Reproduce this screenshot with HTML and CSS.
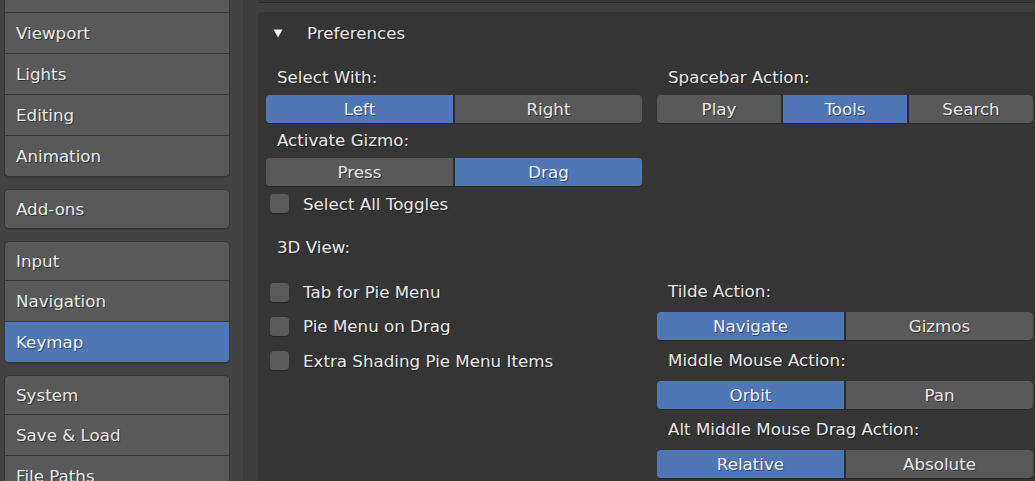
FILE: index.html
```html
<!DOCTYPE html>
<html lang="en">
<head>
    <meta charset="UTF-8">
    <meta name="viewport" content="width=device-width, initial-scale=1.0">
    <title>Preferences</title>
    <link rel="stylesheet" href="styles.css">
</head>
<body>
    <div class="app">
        <nav class="sidebar">
            <div class="group first-group">
                <div class="item">Interface</div>
                <div class="item">Viewport</div>
                <div class="item">Lights</div>
                <div class="item">Editing</div>
                <div class="item">Animation</div>
            </div>
            <div class="group">
                <div class="item">Add-ons</div>
            </div>
            <div class="group">
                <div class="item">Input</div>
                <div class="item">Navigation</div>
                <div class="item active">Keymap</div>
            </div>
            <div class="group">
                <div class="item">System</div>
                <div class="item">Save &amp; Load</div>
                <div class="item">File Paths</div>
            </div>
        </nav>

        <main class="main">
            <div class="prev-edge"></div>
            <section class="panel">
                <div class="panel-header">
                    <svg class="arrow" width="10" height="9" viewBox="0 0 10 9">
                        <polygon points="0.5,0.5 9.5,0.5 5,8.5" fill="#f0f0f0"/>
                    </svg>
                    <span>Preferences</span>
                </div>

                <div class="cols">
                    <div class="col">
                        <div class="label">Select With:</div>
                        <div class="seg">
                            <span class="on">Left</span>
                            <span>Right</span>
                        </div>
                        <div class="label">Activate Gizmo:</div>
                        <div class="seg">
                            <span>Press</span>
                            <span class="on">Drag</span>
                        </div>
                        <div class="check"><span class="box"></span>Select All Toggles</div>
                    </div>
                    <div class="col">
                        <div class="label">Spacebar Action:</div>
                        <div class="seg">
                            <span>Play</span>
                            <span class="on">Tools</span>
                            <span>Search</span>
                        </div>
                    </div>
                </div>

                <div class="section-label">3D View:</div>

                <div class="cols">
                    <div class="col checks">
                        <div class="check"><span class="box"></span>Tab for Pie Menu</div>
                        <div class="check"><span class="box"></span>Pie Menu on Drag</div>
                        <div class="check"><span class="box"></span>Extra Shading Pie Menu Items</div>
                    </div>
                    <div class="col">
                        <div class="label tall">Tilde Action:</div>
                        <div class="seg">
                            <span class="on">Navigate</span>
                            <span>Gizmos</span>
                        </div>
                        <div class="label tall">Middle Mouse Action:</div>
                        <div class="seg">
                            <span class="on">Orbit</span>
                            <span>Pan</span>
                        </div>
                        <div class="label tall">Alt Middle Mouse Drag Action:</div>
                        <div class="seg">
                            <span class="on">Relative</span>
                            <span>Absolute</span>
                        </div>
                    </div>
                </div>
            </section>
        </main>
    </div>
</body>
</html>
```

FILE: styles.css
```css
body {
    margin: 0;
    background-color: #3d3d3d;
    font-family: "DejaVu Sans", sans-serif;
    font-size: 16.7px;
    color: #e8e8e8;
    overflow: hidden;
}
.app {
    display: flex;
    height: 481px;
    overflow: hidden;
}

/* left navigation */
.sidebar {
    width: 226px;
    flex-shrink: 0;
    padding: 0 13px 0 4px;
    background-color: #434343;
}
.group {
    background-color: #595959;
    border: 1px solid #363636;
    border-radius: 5px;
    overflow: hidden;
    margin-bottom: 12px;
    box-shadow: 0 1px 1px rgba(0, 0, 0, 0.15);
}
.first-group {
    margin-top: -27px;
}
.item {
    height: 40px;
    line-height: 40px;
    padding-left: 11px;
    border-top: 1px solid #383838;
    text-shadow: 1px 1px 0 rgba(0, 0, 0, 0.45);
}
.item:first-child {
    height: 38px;
    line-height: 38px;
    border-top: none;
}
.item.active {
    background-color: #5077b5;
    color: #f2f2f2;
}

/* main region */
.main {
    flex: 1;
    display: flex;
    flex-direction: column;
    padding-left: 15px;
    min-width: 0;
}
.prev-edge {
    height: 2px;
    background-color: #393939;
    border-bottom: 1px solid #2b2b2b;
    margin-bottom: 9px;
}
.panel {
    flex: 1;
    background-color: #353535;
    border-radius: 5px 0 0 0;
    padding: 0 2px 0 8px;
}
.panel-header {
    display: flex;
    align-items: center;
    height: 42px;
    padding-left: 7px;
    text-shadow: 1px 1px 0 rgba(0, 0, 0, 0.45);
}
.arrow {
    margin-right: 24px;
    margin-top: 1px;
}

.cols {
    display: flex;
    gap: 15px;
}
.panel-header + .cols {
    margin-top: 6px;
}
.col {
    flex: 1;
    min-width: 0;
}
.label {
    height: 35px;
    line-height: 35px;
    padding-left: 11px;
    text-shadow: 1px 1px 0 rgba(0, 0, 0, 0.45);
}
.label.tall {
    height: 41px;
    line-height: 41px;
}
.section-label {
    height: 50px;
    line-height: 52px;
    padding-left: 11px;
    text-shadow: 1px 1px 0 rgba(0, 0, 0, 0.45);
}

/* segmented buttons */
.seg {
    display: flex;
    gap: 2px;
    height: 28px;
    border-radius: 4px;
    overflow: hidden;
    background-color: #2e2e2e;
    box-shadow: 0 1px 0 rgba(0, 0, 0, 0.25);
}
.seg span {
    flex: 1;
    display: flex;
    align-items: center;
    justify-content: center;
    background-color: #595959;
    color: #e8e8e8;
    text-shadow: 1px 1px 0 rgba(0, 0, 0, 0.45);
}
.seg span.on {
    background-color: #5077b5;
    color: #f2f2f2;
}

/* checkboxes */
.check {
    display: flex;
    align-items: center;
    height: 35px;
    padding-left: 4px;
    text-shadow: 1px 1px 0 rgba(0, 0, 0, 0.45);
}
.checks {
    padding-top: 4px;
}
.checks .check {
    height: 34.3px;
}
.box {
    width: 19px;
    height: 19px;
    border-radius: 4px;
    background-color: #5a5a5a;
    box-shadow: 0 1px 1px rgba(0, 0, 0, 0.3);
    margin-right: 14px;
    flex-shrink: 0;
}
```
